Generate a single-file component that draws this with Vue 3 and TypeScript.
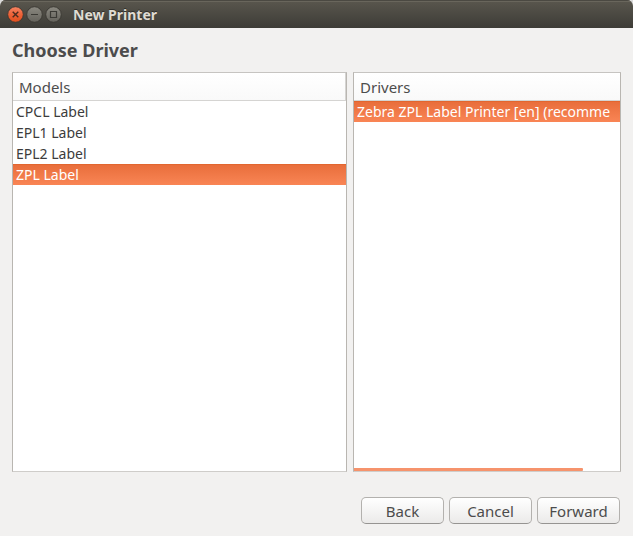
<script setup lang="ts">
import { computed, ref } from 'vue'

const models = ['CPCL Label', 'EPL1 Label', 'EPL2 Label', 'ZPL Label']
const drivers = ['Zebra ZPL Label Printer [en] (recomme']
const actions = ['Back', 'Cancel', 'Forward']

const selectedModel = ref('ZPL Label')
const selectedDriver = ref(drivers[0])
const visibleShare = ref(86)
const thumbStyle = computed(() => ({ width: `${visibleShare.value}%` }))
</script>

<template>
  <div class="window">
    <header class="titlebar">
      <div class="controls">
        <button class="control" type="button" aria-label="Close">
          <svg viewBox="0 0 17 17" width="17" height="17">
            <defs>
              <linearGradient id="close-fill" x1="0" y1="0" x2="0" y2="1">
                <stop offset="0" stop-color="#f58564" />
                <stop offset="0.5" stop-color="#ee6238" />
                <stop offset="1" stop-color="#df4e1c" />
              </linearGradient>
            </defs>
            <circle cx="8.5" cy="8.5" r="7.8" fill="url(#close-fill)" stroke="#3a3832" stroke-width="0.9" />
            <path d="M5.7 5.7l5.6 5.6M11.3 5.7l-5.6 5.6" stroke="#4b2b1e" stroke-width="1.4" fill="none" />
          </svg>
        </button>
        <button class="control" type="button" aria-label="Minimize">
          <svg viewBox="0 0 17 17" width="17" height="17">
            <defs>
              <linearGradient id="control-fill" x1="0" y1="0" x2="0" y2="1">
                <stop offset="0" stop-color="#8b8981" />
                <stop offset="1" stop-color="#64625b" />
              </linearGradient>
            </defs>
            <circle cx="8.5" cy="8.5" r="7.8" fill="url(#control-fill)" stroke="#3a3832" stroke-width="0.9" />
            <path d="M5 8.5h7" stroke="#3b3a35" stroke-width="1.2" fill="none" />
          </svg>
        </button>
        <button class="control" type="button" aria-label="Maximize">
          <svg viewBox="0 0 17 17" width="17" height="17">
            <circle cx="8.5" cy="8.5" r="7.8" fill="url(#control-fill)" stroke="#3a3832" stroke-width="0.9" />
            <path d="M5.5 5.5h6v6h-6z" stroke="#3b3a35" stroke-width="1.2" fill="none" />
          </svg>
        </button>
      </div>
      <span class="title">New Printer</span>
    </header>

    <main class="content">
      <h1 class="heading">Choose Driver</h1>

      <div class="panes">
        <section class="pane">
          <table class="list">
            <thead>
              <tr><th class="divided" scope="col">Models</th></tr>
            </thead>
            <tbody>
              <tr
                v-for="model in models"
                :key="model"
                :class="{ selected: model === selectedModel }"
                @click="selectedModel = model"
              >
                <td>{{ model }}</td>
              </tr>
            </tbody>
          </table>
        </section>

        <section class="pane">
          <table class="list">
            <thead>
              <tr><th scope="col">Drivers</th></tr>
            </thead>
            <tbody>
              <tr
                v-for="driver in drivers"
                :key="driver"
                :class="{ selected: driver === selectedDriver }"
                @click="selectedDriver = driver"
              >
                <td>{{ driver }}</td>
              </tr>
            </tbody>
          </table>
          <div class="thumb" :style="thumbStyle"></div>
        </section>
      </div>

      <footer class="actions">
        <button v-for="action in actions" :key="action" class="action" type="button">
          {{ action }}
        </button>
      </footer>
    </main>
  </div>
</template>

<style>
body {
  background: #dcdcdc;
}
</style>

<style scoped>
.window {
  display: flex;
  flex-direction: column;
  min-height: 100vh;
  border-radius: 6px 6px 0 0;
  overflow: hidden;
  background: #f2f1f0;
  color: #4c4c4c;
  font-family: "Noto Sans", "Open Sans", sans-serif;
  font-size: 15px;
}

.titlebar {
  display: flex;
  align-items: center;
  gap: 11px;
  height: 28px;
  box-sizing: border-box;
  padding: 1px 7px 0;
  background: linear-gradient(#5a574e, #3d3c37);
  box-shadow: inset 0 1px #4b4942, inset 0 2px #69665c;
}

.controls {
  display: flex;
  gap: 2px;
}

.control {
  display: block;
  width: 17px;
  height: 17px;
  padding: 0;
  border: 0;
  background: none;
}

.control svg {
  display: block;
}

.title {
  color: #dfdbd2;
  font-size: 14px;
  font-weight: 700;
  line-height: 20px;
  text-shadow: 0 -1px #2f2e2a;
}

.content {
  display: flex;
  flex: 1;
  flex-direction: column;
  padding: 10px 12px 12px;
}

.heading {
  margin: 0 0 10px;
  font-size: 18px;
  font-weight: 700;
  line-height: 24px;
}

.panes {
  display: grid;
  flex: 1;
  grid-template-columns: minmax(0, 5fr) minmax(0, 4fr);
  gap: 6px;
}

.pane {
  display: flex;
  flex-direction: column;
  justify-content: space-between;
  overflow: hidden;
  border: 1px solid #b9b6b1;
  border-top-color: #c6c4c1;
  border-bottom-color: #cfcdca;
  background: #fff;
}

.list {
  width: 100%;
  table-layout: fixed;
  border-collapse: separate;
  border-spacing: 0;
}

th {
  height: 27px;
  padding: 0 6px;
  border-bottom: 1px solid #d5d4d2;
  background: linear-gradient(#fff, #f9f9f9);
  font-weight: 400;
  line-height: 20px;
  text-align: left;
}

.divided {
  border-right: 1px solid #d5d4d2;
}

td {
  height: 21px;
  padding: 0 3px;
  overflow: hidden;
  color: #3c3c3c;
  font-size: 14px;
  line-height: 21px;
  white-space: nowrap;
}

.selected td {
  background: linear-gradient(#e86d3a, #f98555);
  box-shadow: inset 0 1px #e2662f;
  color: #fff;
}

.thumb {
  height: 3px;
  border-radius: 0 1px 1px 0;
  background: #f6936c;
}

.actions {
  display: flex;
  justify-content: flex-end;
  gap: 5px;
  margin-top: 25px;
  padding-right: 1px;
}

.action {
  width: 83px;
  height: 27px;
  padding: 0;
  border: 1px solid #b3b1ae;
  border-bottom-color: #969492;
  border-radius: 5px;
  background: linear-gradient(#fff, #ebeae9);
  color: #4c4c4c;
  font: inherit;
  line-height: 20px;
}
</style>
